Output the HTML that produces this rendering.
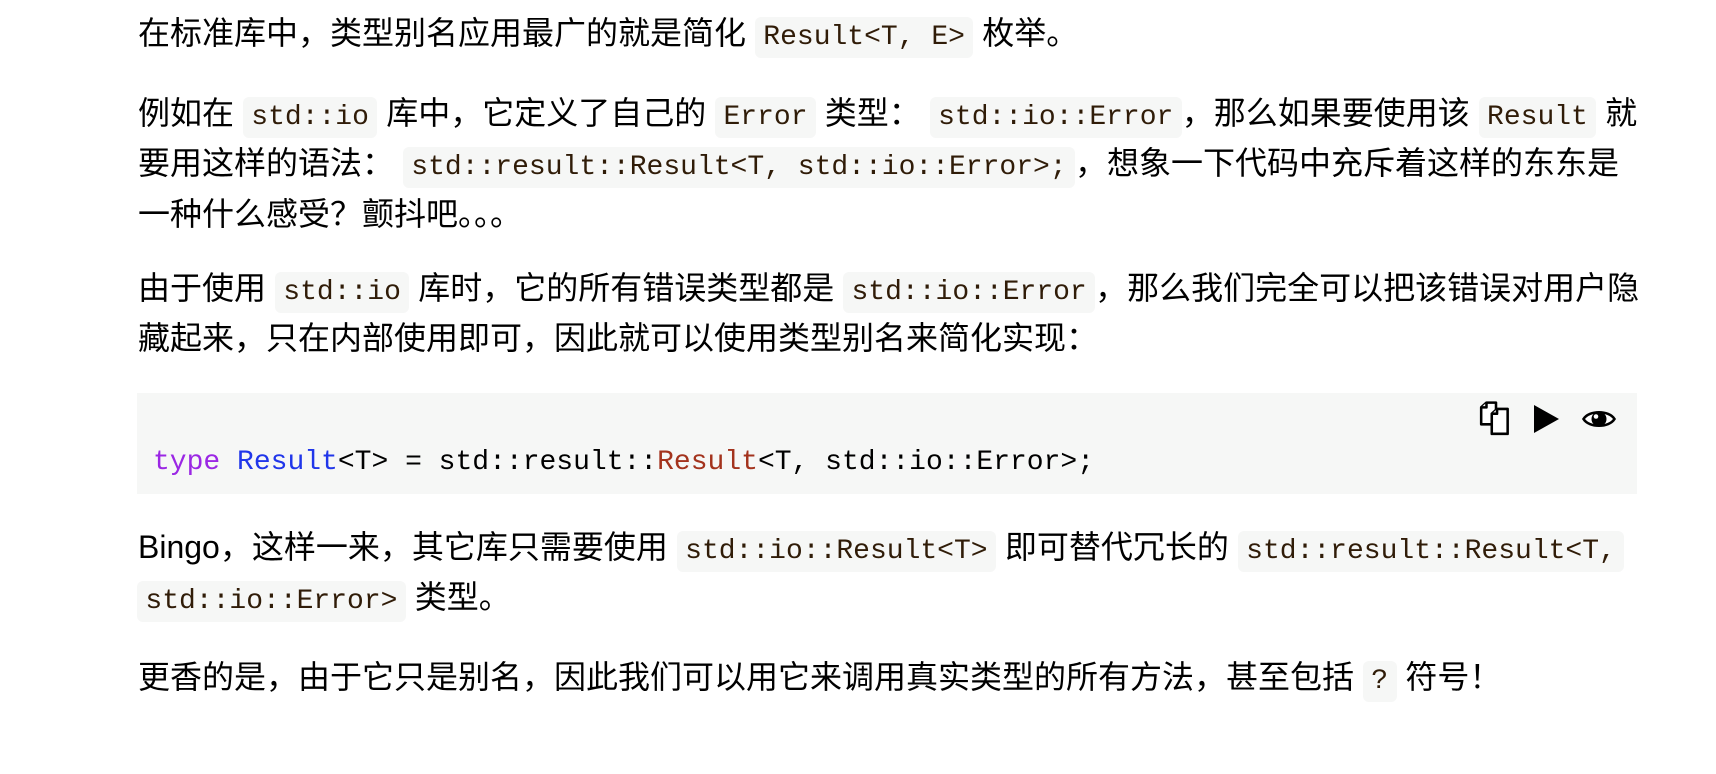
<!DOCTYPE html>
<html><head><meta charset="utf-8"><style>
html,body{margin:0;padding:0;background:#fff;width:1716px;height:774px;overflow:hidden}
body{position:relative;font-family:"Liberation Sans","Noto Sans CJK SC",sans-serif;font-size:32px;color:#000}
.l{position:absolute;left:138px;height:50px;line-height:50px;white-space:nowrap}
code{font-family:"Liberation Mono","Noto Sans CJK SC",monospace;font-size:28px;background:#f6f7f6;color:#301c08;padding:5px 8.4px;border-radius:6px}
.blk{position:absolute;left:137px;top:393px;width:1508px;height:101px;background:#f6f7f6}
.ct{position:absolute;left:153px;top:438px;height:50px;line-height:50px;font-family:"Liberation Mono",monospace;font-size:28px;white-space:pre;color:#000}
.kw{color:#9b27e4}.ty{color:#2036ea}.rr{color:#a3331d}
.cjk{font-family:"Noto Sans CJK SC",sans-serif}
</style></head><body>
<div class="l" style="top:8px">在标准库中，类型别名应用最广的就是简化 <code>Result&lt;T, E&gt;</code> 枚举。</div>
<div class="l" style="top:88px">例如在 <code>std::io</code> 库中，它定义了自己的 <code>Error</code> 类型： <code>std::io::Error</code>，那么如果要使用该 <code>Result</code> 就</div>
<div class="l" style="top:138px">要用这样的语法： <code>std::result::Result&lt;T, std::io::Error&gt;;</code>，想象一下代码中充斥着这样的东东是</div>
<div class="l" style="top:187px">一种什么感受？颤抖吧<span class="cjk">。。。</span></div>
<div class="l" style="top:263px">由于使用 <code>std::io</code> 库时，它的所有错误类型都是 <code>std::io::Error</code>，那么我们完全可以把该错误对用户隐</div>
<div class="l" style="top:313px">藏起来，只在内部使用即可，因此就可以使用类型别名来简化实现：</div>
<div class="blk" style="width:1500px"></div>
<svg style="position:absolute;left:1478px;top:401px" width="36" height="36" viewBox="0 0 34 34"><g fill="#fff" stroke="#000" stroke-width="2.4" stroke-linejoin="round"><path d="M3 6 L8 1.5 H17 V22 H3 Z"/><path d="M3 6 H8 V1.5"/><path d="M13 12 L18 7.5 H28 V31 H13 Z"/><path d="M13 12 H18 V7.5"/></g></svg>
<svg style="position:absolute;left:1533px;top:405px" width="27" height="28" viewBox="0 0 27 28"><path d="M1 0 L26 14 L1 28 Z" fill="#000"/></svg>
<svg style="position:absolute;left:1582px;top:408px" width="34" height="22" viewBox="0 0 34 22"><path d="M1.5 11 C7 2 27 2 32.5 11 C27 20 7 20 1.5 11 Z" fill="#fff" stroke="#000" stroke-width="2.6"/><circle cx="17" cy="11" r="7.5" fill="#000"/><circle cx="14" cy="8.5" r="2.3" fill="#fff"/></svg>
<div class="ct"><span class="kw">type</span> <span class="ty">Result</span>&lt;T&gt; = std::result::<span class="rr">Result</span>&lt;T, std::io::Error&gt;;</div>
<div class="l" style="top:522px">Bingo，这样一来，其它库只需要使用 <code>std::io::Result&lt;T&gt;</code> 即可替代冗长的 <code>std::result::Result&lt;T,</code></div>
<div class="l" style="top:572px"><code style="margin-left:-1px">std::io::Error&gt;</code> 类型。</div>
<div class="l" style="top:652px">更香的是，由于它只是别名，因此我们可以用它来调用真实类型的所有方法，甚至包括 <code>?</code> 符号！</div>
</body></html>
